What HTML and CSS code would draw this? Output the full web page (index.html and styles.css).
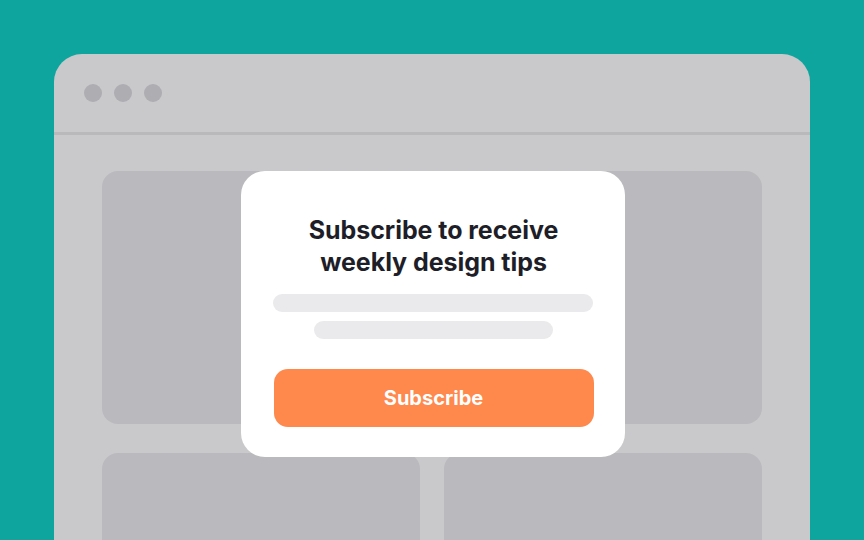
FILE: index.html
```html
<!DOCTYPE html>
<html>
<head>
<meta charset="utf-8">
<link rel="stylesheet" href="styles.css">
</head>
<body>
<div class="stage">
  <div class="window">
    <div class="titlebar">
      <span class="dot"></span><span class="dot"></span><span class="dot"></span>
    </div>
    <div class="content">
      <div class="card"></div>
      <div class="card"></div>
      <div class="card"></div>
      <div class="card"></div>
    </div>
    <div class="modal">
      <h1 class="title">Subscribe to receive<br>weekly design tips</h1>
      <div class="bar bar-long"></div>
      <div class="bar bar-short"></div>
      <button class="btn">Subscribe</button>
    </div>
  </div>
</div>
</body>
</html>
```
FILE: styles.css
```css
* { box-sizing: border-box; }
html, body { margin: 0; padding: 0; }
body {
  width: 864px;
  height: 540px;
  overflow: hidden;
  background: #0EA59F;
  font-family: Inter, "Noto Sans", sans-serif;
}
.stage {
  padding: 54px 54px 0 54px;
}
.window {
  position: relative;
  width: 756px;
  height: 486px;
  overflow: hidden;
  background: #C9C9CB;
  border-radius: 28px 28px 0 0;
}
.titlebar {
  height: 81px;
  border-bottom: 3px solid #B9B9BC;
  display: flex;
  align-items: center;
  gap: 12px;
  padding: 0 0 1px 30px;
}
.dot {
  width: 18px;
  height: 18px;
  border-radius: 50%;
  background: #AEADB2;
}
.content {
  padding: 36px 48px 0 48px;
  display: grid;
  grid-template-columns: 318px 318px;
  grid-auto-rows: 253px;
  column-gap: 24px;
  row-gap: 29px;
}
.card {
  background: #BAB9BD;
  border-radius: 16px;
}
.modal {
  position: absolute;
  left: 187px;
  top: 117px;
  width: 384px;
  height: 286px;
  background: #FFFFFF;
  border-radius: 24px;
  padding: 43px 32px 30px 33px;
  display: flex;
  flex-direction: column;
  align-items: center;
}
.title {
  margin: 0;
  font-size: 25px;
  line-height: 32px;
  font-weight: 700;
  color: #1E1E28;
  text-align: center;
  letter-spacing: -0.05px;
  white-space: nowrap;
}
.bar {
  height: 18px;
  border-radius: 9px;
  background: #EAEAEC;
}
.bar-long { width: 320px; margin-top: 16px; margin-right: 1px; }
.bar-short { width: 239px; margin-top: 9px; }
.btn {
  margin-top: 30px;
  width: 320px;
  height: 58px;
  border: none;
  border-radius: 14px;
  background: #FF884D;
  color: #FFFFFF;
  font-family: Inter, "Noto Sans", sans-serif;
  font-size: 20px;
  font-weight: 700;
  padding: 0;
}
```
